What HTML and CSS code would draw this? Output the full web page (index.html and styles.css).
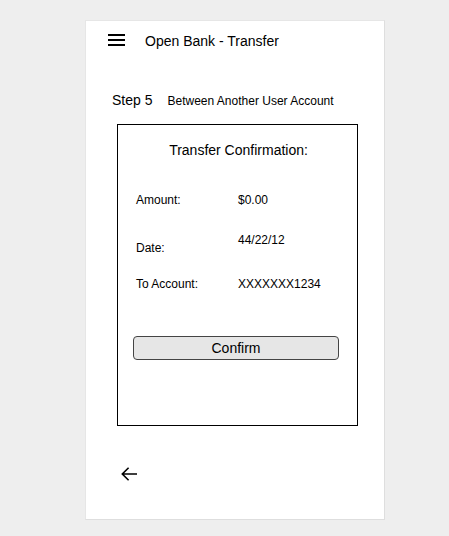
FILE: index.html
```html
<!DOCTYPE html>
<html>
<head>
<meta charset="utf-8">
<link rel="stylesheet" href="styles.css">
</head>
<body>
<div class="card">
  <header class="header">
    <svg class="menu" width="17" height="12" viewBox="0 0 17 12"><rect x="0" y="0" width="17" height="2" fill="#000"/><rect x="0" y="5" width="17" height="2" fill="#000"/><rect x="0" y="10" width="17" height="2" fill="#000"/></svg>
    <span class="title">Open Bank - Transfer</span>
  </header>
  <div class="step">
    <span class="step-num">Step 5</span>
    <span class="step-desc">Between Another User Account</span>
  </div>
  <div class="box">
    <div class="box-title">Transfer Confirmation:</div>
    <div class="row row-amount">
      <span class="label">Amount:</span>
      <span class="value">$0.00</span>
    </div>
    <div class="row row-date">
      <span class="label label-low">Date:</span>
      <span class="value">44/22/12</span>
    </div>
    <div class="row row-account">
      <span class="label">To Account:</span>
      <span class="value">XXXXXXX1234</span>
    </div>
    <button class="confirm">Confirm</button>
  </div>
  <svg class="back" width="16" height="14" viewBox="0 0 16 14"><path d="M16 7H1.3M7.6 0.7L1.3 7l6.3 6.3" fill="none" stroke="#000" stroke-width="1.6"/></svg>
</div>
</body>
</html>
```

FILE: styles.css
```css
html, body {
  margin: 0;
  padding: 0;
}
body {
  background: #eeeeee;
  font-family: "Liberation Sans", Arial, sans-serif;
  color: #000;
  padding: 20px 0 0 85px;
  height: 536px;
  box-sizing: border-box;
}
.card {
  box-sizing: border-box;
  width: 300px;
  height: 500px;
  background: #fff;
  border: 1px solid #e6e6e6;
  border-right-color: #dedede;
  border-bottom-color: #dedede;
  display: flex;
  flex-direction: column;
  align-items: flex-start;
}
.header {
  display: flex;
  align-items: flex-start;
  padding: 12px 0 0 22px;
}
.menu {
  display: block;
  margin-top: 1px;
}
.title {
  font-size: 14px;
  line-height: 16px;
  margin-left: 20px;
}
.step {
  display: flex;
  align-items: baseline;
  margin: 43px 0 0 26px;
  line-height: 16px;
}
.step-num {
  font-size: 14px;
}
.step-desc {
  font-size: 12px;
  margin-left: 15px;
}
.box {
  box-sizing: border-box;
  width: 241px;
  height: 302px;
  margin: 15px 0 0 31px;
  border: 1px solid #000;
  padding: 17px 0 0 0;
  display: flex;
  flex-direction: column;
}
.box-title {
  font-size: 14px;
  line-height: 16px;
  text-align: center;
  padding-left: 2px;
}
.row {
  display: flex;
  align-items: flex-start;
  font-size: 12px;
  line-height: 14px;
  padding-left: 18px;
}
.row-amount { margin-top: 35px; }
.row-date { margin-top: 26px; }
.row-account { margin-top: 22px; }
.label {
  width: 102px;
  flex: none;
}
.label-low {
  margin-top: 8px;
}
.confirm {
  box-sizing: border-box;
  width: 206px;
  height: 24px;
  margin: 45px 0 0 15px;
  padding: 0;
  background: #e6e6e6;
  border: 1px solid #444;
  border-radius: 4px;
  font-family: "Liberation Sans", Arial, sans-serif;
  font-size: 14px;
  line-height: 21px;
  color: #000;
}
.back {
  display: block;
  margin: 41px 0 0 35px;
}
```
